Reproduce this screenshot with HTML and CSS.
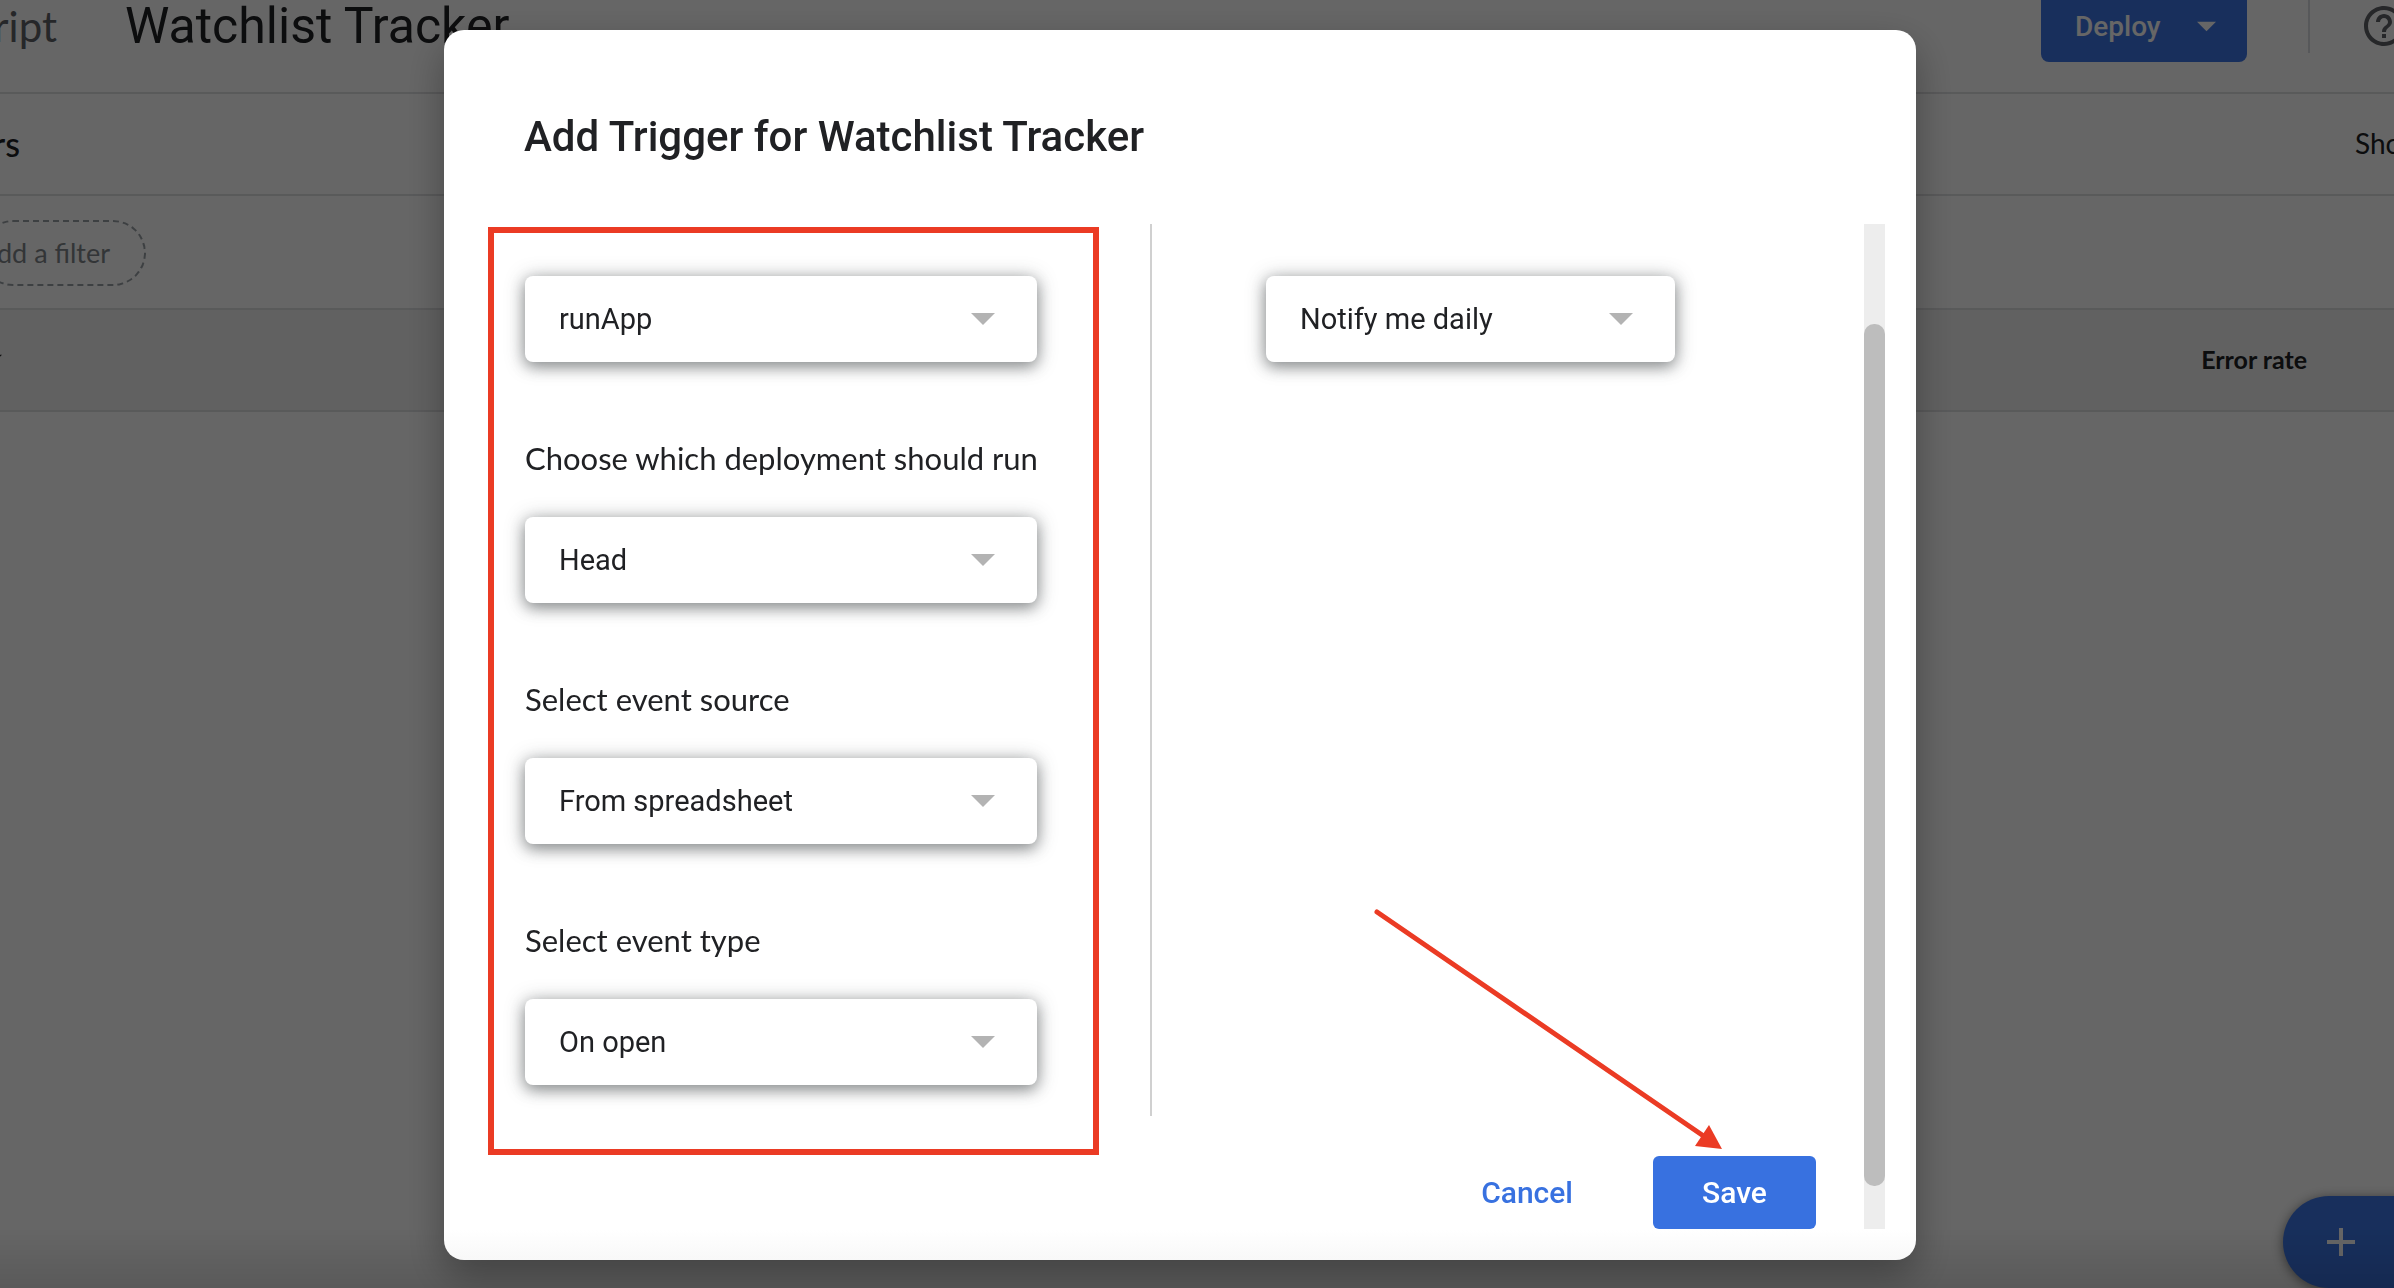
FILE: index.html
```html
<!DOCTYPE html>
<html lang="en">
<head>
    <meta charset="utf-8">
    <title>Watchlist Tracker - Triggers</title>
    <link rel="stylesheet" href="styles.css">
</head>
<body>

    <!-- Triggers page, sits behind the dialog -->
    <div class="page">
        <header class="top-bar">
            <div class="brand"><span>Apps Script</span></div>
            <h1 class="project-name">Watchlist Tracker</h1>
            <button class="deploy-button">
                Deploy
                <svg class="caret" viewBox="0 0 24 12"><path d="M0 0h24L12 12z"/></svg>
            </button>
            <div class="top-divider"></div>
            <button class="help-button" aria-label="Help">
                <svg viewBox="0 0 24 24">
                    <path d="M11 18h2v-2h-2v2zm1-16C6.48 2 2 6.48 2 12s4.48 10 10 10 10-4.48 10-10S17.52 2 12 2zm0 18c-4.41 0-8-3.59-8-8s3.59-8 8-8 8 3.59 8 8-3.59 8-8 8zm0-14c-2.21 0-4 1.79-4 4h2c0-1.1.9-2 2-2s2 .9 2 2c0 2-3 1.75-3 5h2c0-2.25 3-2.5 3-5 0-2.21-1.79-4-4-4z"/>
                </svg>
            </button>
        </header>

        <div class="section-bar">
            <h2 class="section-name"><span>Triggers</span></h2>
            <span class="section-count">Showing</span>
        </div>

        <div class="filter-bar">
            <button class="filter-chip"><span>Add a filter</span></button>
        </div>

        <div class="list-head">
            <svg class="caret sort-caret" viewBox="0 0 24 12"><path d="M0 0h24L12 12z"/></svg>
            <span class="col-rate">Error rate</span>
        </div>

        <button class="add-button" aria-label="Add Trigger">
            <svg viewBox="0 0 28 28"><path d="M12 0h4v12h12v4H16v12h-4V16H0v-4h12z"/></svg>
        </button>
    </div>

    <div class="overlay">
        <div class="dialog" role="dialog" aria-labelledby="dialog-title">
            <h2 id="dialog-title" class="dialog-title">Add Trigger for Watchlist Tracker</h2>

            <div class="dialog-body">
                <form class="dialog-form">
                    <div class="columns">
                        <div class="settings">
                            <div class="field">
                                <select class="select" aria-label="Choose which function to run">
                                    <option>runApp</option>
                                </select>
                            </div>
                            <div class="field">
                                <label for="deployment">Choose which deployment should run</label>
                                <select id="deployment" class="select">
                                    <option>Head</option>
                                </select>
                            </div>
                            <div class="field">
                                <label for="source">Select event source</label>
                                <select id="source" class="select">
                                    <option>From spreadsheet</option>
                                </select>
                            </div>
                            <div class="field">
                                <label for="type">Select event type</label>
                                <select id="type" class="select">
                                    <option>On open</option>
                                </select>
                            </div>
                        </div>
                        <div class="notifications">
                            <select class="select" aria-label="Failure notification settings">
                                <option>Notify me daily</option>
                            </select>
                        </div>
                    </div>
                    <div class="actions">
                        <button type="button" class="cancel-button">Cancel</button>
                        <button type="button" class="save-button">Save</button>
                    </div>
                    <!-- Arrow pointing at the save button -->
                    <svg class="arrow" viewBox="0 0 350 242">
                        <path d="M4 4L332 229" stroke="#eb3b24" stroke-width="5" stroke-linecap="round"/>
                        <path d="M349 241L336 217L322 238z" fill="#eb3b24"/>
                    </svg>
                </form>
                <div class="scroll-track"><div class="scroll-thumb"></div></div>
            </div>
        </div>
    </div>

</body>
</html>
```

FILE: styles.css
```css
* {
    box-sizing: border-box;
}

body {
    margin: 0;
    height: 100vh;
    overflow: hidden;
    font-family: Lato, sans-serif;
    color: #202124;
    background-color: white;
}

button {
    border: 0;
    padding: 0;
    background: none;
    font-family: Roboto, sans-serif;
    cursor: pointer;
}

h1, h2 {
    margin: 0;
    font-weight: 400;
}

.page {
    height: 100vh;
    overflow: hidden;
}

/* Top bar */
.top-bar {
    display: flex;
    height: 94px;
    padding-bottom: 40px;
    align-items: center;
    border-bottom: 2px solid #dfe0e2;
}

/* The left part of the bar is scrolled out of the window */
.brand,
.section-name {
    display: flex;
    justify-content: flex-end;
    white-space: nowrap;
}

.brand {
    width: 57px;
    font-size: 42px;
    line-height: 52px;
    color: #5f6368;
}

.project-name {
    margin-left: 68px;
    font-family: Roboto, sans-serif;
    font-size: 50px;
    line-height: 52px;
}

.deploy-button {
    display: flex;
    flex: none;
    align-items: center;
    justify-content: space-between;
    align-self: flex-end;
    width: 206px;
    height: 72px;
    margin: 0 61px -10px auto;
    padding: 0 31px 0 34px;
    border-radius: 8px;
    color: white;
    background-color: #3c76e6;
    font-size: 28px;
    font-weight: 500;
}

.caret {
    width: 19px;
    height: 11px;
    fill: currentColor;
}

.top-divider {
    width: 2px;
    height: 53px;
    background-color: #dadce0;
}

.help-button {
    flex: none;
    width: 48px;
    height: 48px;
    margin: 0 -14px 0 50px;
}

.help-button svg {
    display: block;
    fill: #5f6368;
}

/* Section bar */
.section-bar {
    display: flex;
    align-items: center;
    justify-content: space-between;
    height: 102px;
    padding-bottom: 2px;
    border-bottom: 2px solid #dfe0e2;
}

.section-name {
    width: 20px;
    font-size: 34px;
    font-weight: 500;
}

.section-count {
    width: 39px;
    font-size: 28px;
}

.filter-bar {
    display: flex;
    align-items: center;
    height: 114px;
    padding-top: 1px;
    border-bottom: 2px solid #dfe0e2;
}

.filter-chip {
    display: flex;
    justify-content: flex-end;
    align-items: center;
    width: 166px;
    height: 66px;
    margin-left: -20px;
    padding-right: 34px;
    border: 2px dashed #9aa0a6;
    border-radius: 33px;
    color: #80868b;
    font-family: Lato, sans-serif;
    font-size: 27px;
    white-space: nowrap;
}

.list-head {
    display: flex;
    align-items: center;
    justify-content: space-between;
    height: 102px;
    padding: 0 87px 2px 0;
    border-bottom: 2px solid #dfe0e2;
    background-color: #f3f3f3;
    font-size: 25px;
    font-weight: 700;
}

.sort-caret {
    margin-left: -17px;
}

.add-button {
    position: fixed;
    right: -60px;
    bottom: 0;
    width: 171px;
    height: 92px;
    padding-left: 44px;
    border-radius: 46px;
    background-color: #3c76e6;
    box-shadow: 0 2px 12px rgba(0, 0, 0, 0.5);
    text-align: left;
}

.add-button svg {
    display: block;
    width: 28px;
    fill: white;
}

/* Dialog */
.overlay {
    position: fixed;
    inset: 0;
    display: flex;
    align-items: flex-start;
    padding-top: 30px;
    background: linear-gradient(transparent calc(100% - 60px), rgba(0, 0, 0, 0.12)) rgba(0, 0, 0, 0.6);
}

.dialog {
    display: flex;
    flex-direction: column;
    width: 1472px;
    margin-left: 444px;
    padding: 82px 31px 31px 44px;
    border-radius: 20px;
    background: linear-gradient(transparent calc(100% - 30px), #f8f8f8) white;
    box-shadow: 0 16px 40px rgba(0, 0, 0, 0.32);
}

.dialog-title {
    margin: 0 0 62px 36px;
    font-family: Roboto, sans-serif;
    font-size: 42px;
    font-weight: 500;
    line-height: 50px;
}

.dialog-body {
    display: flex;
    justify-content: space-between;
}

.dialog-form {
    position: relative;
    flex: 1;
    margin-right: 48px;
}

.columns {
    display: flex;
}

.settings {
    width: 611px;
    margin-top: 3px;
    padding: 43px 31px 64px;
    border: 6px solid #eb3b24;
}

.field {
    width: 512px;
}

.field + .field {
    margin-top: 76px;
}

.field label {
    display: block;
    margin-bottom: 39px;
    font-size: 31px;
    line-height: 40px;
    white-space: nowrap;
}

.notifications {
    flex: 1;
    align-self: flex-start;
    height: 892px;
    margin-left: 51px;
    padding: 52px 0 0 114px;
    border-left: 2px solid #d0d0d0;
}

.notifications .select {
    width: 409px;
}

.select {
    display: block;
    appearance: none;
    width: 100%;
    height: 86px;
    padding: 0 34px;
    border: 0;
    border-radius: 8px;
    color: #202124;
    background: white url("data:image/svg+xml,%3Csvg xmlns='http://www.w3.org/2000/svg' viewBox='0 0 24 12'%3E%3Cpath d='M0 0h24L12 12z' fill='%23b3b3b3'/%3E%3C/svg%3E") no-repeat right 42px center / 24px 12px;
    box-shadow: 0 5px 14px rgba(60, 64, 67, 0.4), 0 2px 20px rgba(60, 64, 67, 0.4);
    font-family: Roboto, sans-serif;
    font-size: 29px;
}

.actions {
    display: flex;
    justify-content: flex-end;
    gap: 52px;
    margin-top: 1px;
}

.cancel-button,
.save-button {
    height: 73px;
    border-radius: 6px;
    font-size: 30px;
    font-weight: 500;
}

.cancel-button {
    padding: 0 28px;
    color: #3871e0;
}

.save-button {
    width: 163px;
    color: white;
    background-color: #3871e0;
}

.arrow {
    position: absolute;
    right: 93px;
    bottom: 79px;
    width: 350px;
    height: 242px;
    fill: none;
}

.scroll-track {
    width: 21px;
    padding: 100px 0 43px;
    background-color: #ededed;
}

.scroll-thumb {
    height: 100%;
    border-radius: 10px;
    background-color: #bdbdbd;
}
```
